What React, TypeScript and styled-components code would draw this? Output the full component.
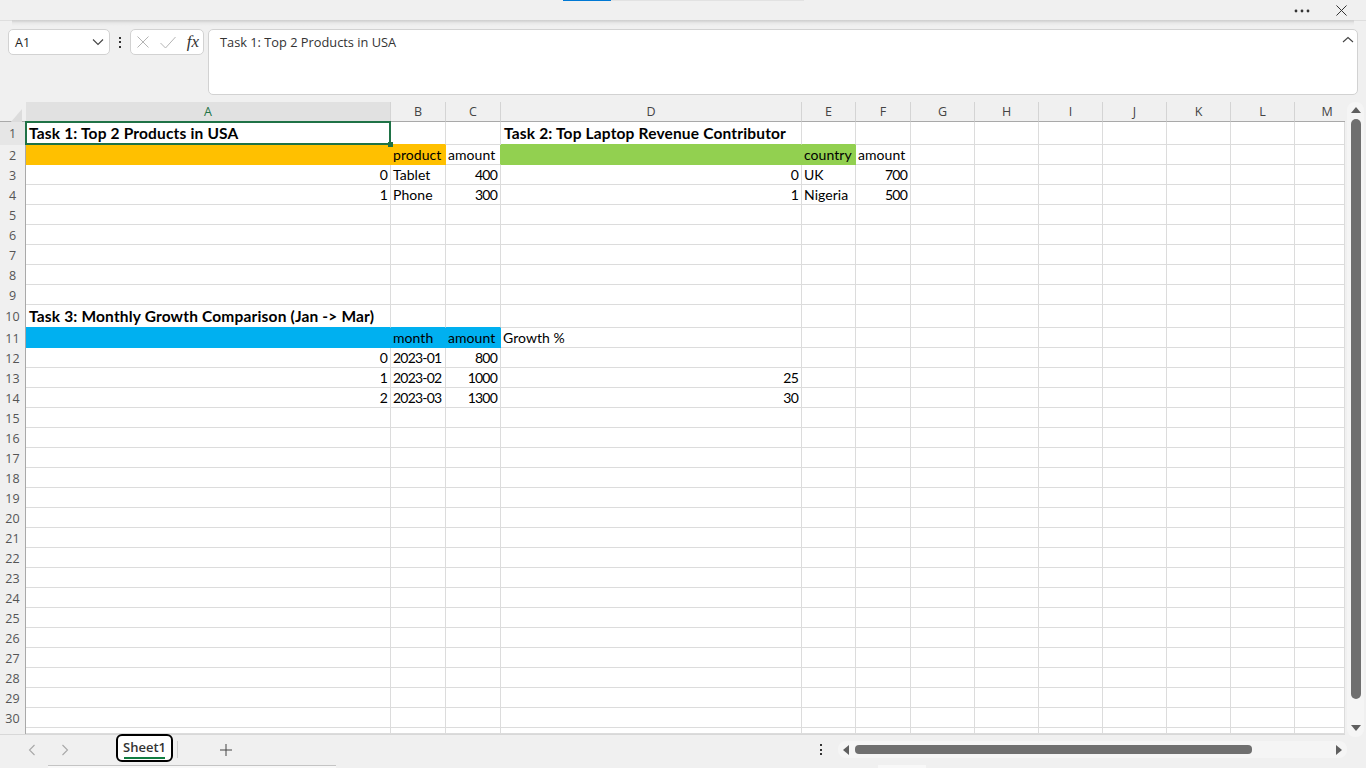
import React from 'react'
import styled, { createGlobalStyle } from 'styled-components'

const UI_FONT = '"Open Sans", "Noto Sans", sans-serif'
const CELL_FONT = 'Lato, "Noto Sans", sans-serif'
const GRID_LINE = '#dcdcdc'

const GlobalStyle = createGlobalStyle`
  html, body {
    margin: 0;
    padding: 0;
    background: #f0f0f0;
    overflow: hidden;
  }
`

const Page = styled.div`
  width: 1366px;
  height: 768px;
  display: flex;
  flex-direction: column;
  background: #f0f0f0;
  overflow: hidden;
  font-family: ${UI_FONT};
`

const TopBar = styled.div`
  height: 21px;
  box-sizing: border-box;
  border-bottom: 1px solid #dedede;
  display: flex;
  flex-direction: column;
`

const LoadStrip = styled.div`
  height: 1px;
  padding-left: 563px;
  display: flex;
`

const LoadSegment = styled.div<{ $width: number; $color: string }>`
  width: ${(p) => p.$width}px;
  height: 1px;
  background: ${(p) => p.$color};
`

const WindowActions = styled.div`
  flex: 1;
  display: flex;
  justify-content: flex-end;
  align-items: center;
  gap: 26px;
  padding-right: 19px;
`

const IconSlot = styled.div`
  display: flex;
  align-items: center;
  justify-content: center;
`

const RibbonShadow = styled.div`
  height: 8px;
  margin: -1px 12px 1px;
  background: linear-gradient(#cfcfcf 0, #d4d4d4 1px, #e8e8e8 3px, #f0f0f0 6px);
`

const FormulaBar = styled.div`
  height: 73px;
  box-sizing: border-box;
  padding: 0 8px;
  display: flex;
  align-items: flex-start;
`

const NameBox = styled.div`
  width: 102px;
  height: 26px;
  box-sizing: border-box;
  padding: 0 5px 0 6px;
  background: #fff;
  border: 1px solid #d2d2d2;
  border-radius: 5px;
  display: flex;
  align-items: center;
  justify-content: space-between;
  font-size: 12.5px;
  color: #222;
`

const VerticalDots = styled.div`
  width: 20px;
  height: 26px;
  display: flex;
  flex-direction: column;
  align-items: center;
  justify-content: center;
  gap: 2.5px;
`

const Dot = styled.span`
  width: 2px;
  height: 2px;
  background: #333;
`

const FormulaButtons = styled.div`
  width: 74px;
  height: 26px;
  box-sizing: border-box;
  padding: 0 4px 0 6px;
  background: #fff;
  border: 1px solid #d2d2d2;
  border-radius: 5px;
  display: flex;
  align-items: center;
  justify-content: space-between;
`

const FxLabel = styled.span`
  font-family: "Liberation Serif", serif;
  font-style: italic;
  font-size: 17px;
  color: #333;
  line-height: 20px;
`

const FormulaInput = styled.div`
  margin-left: 4px;
  width: 1150px;
  height: 66px;
  box-sizing: border-box;
  padding: 3px 3px 0 11px;
  background: #fff;
  border: 1px solid #d2d2d2;
  border-radius: 5px;
  display: flex;
  align-items: flex-start;
  justify-content: space-between;
  font-size: 12.8px;
  line-height: 18px;
  color: #333;
`

const Workspace = styled.div`
  height: 633px;
  display: flex;
  align-items: flex-start;
`

const SheetGrid = styled.div`
  width: 1345px;
  height: 633px;
  box-sizing: border-box;
  border-bottom: 1px solid #d8d8d8;
  display: grid;
  grid-template-columns: 26px 365px 55px 55px 301px 54px 55px repeat(6, 64px) 50px;
  overflow: hidden;
  background: #fff;
`

const Corner = styled.div`
  height: 20px;
  box-sizing: border-box;
  padding: 4px 0 0 10px;
  background: #f0f0f0;
  border-bottom: 1px solid #a9a9a9;
`

const ColumnHeader = styled.div<{ $active?: boolean; $last?: boolean }>`
  height: 20px;
  box-sizing: border-box;
  padding-left: ${(p) => (p.$last ? '14px' : 0)};
  display: flex;
  align-items: center;
  justify-content: center;
  font-size: 12.5px;
  color: ${(p) => (p.$active ? '#217346' : '#444')};
  background: ${(p) => (p.$active ? '#e1e1e1' : '#f0f0f0')};
  border-right: ${(p) => (p.$last ? 0 : '1px solid #d4d4d4')};
  border-bottom: 1px solid #a9a9a9;
`

const RowHeader = styled.div<{ $active?: boolean; $height: number }>`
  height: ${(p) => p.$height}px;
  box-sizing: border-box;
  display: flex;
  align-items: center;
  justify-content: center;
  font-size: 12.5px;
  color: #555;
  background: ${(p) => (p.$active ? '#e6e6e6' : '#f0f0f0')};
  border-right: 1px solid #a9a9a9;
`

const Cell = styled.div<{
  $height: number
  $fill?: string
  $rightLine: string
  $bottomLine: string
  $right?: boolean
  $bold?: boolean
  $digits?: boolean
}>`
  position: relative;
  height: ${(p) => p.$height}px;
  box-sizing: border-box;
  padding: ${(p) => (p.$bold ? '0 3px' : p.$right ? '0 3px 0 2px' : '0 2px')};
  display: flex;
  align-items: center;
  justify-content: ${(p) => (p.$right ? 'flex-end' : 'flex-start')};
  font-family: ${CELL_FONT};
  font-size: ${(p) => (p.$bold ? '15.5px' : '14px')};
  font-weight: ${(p) => (p.$bold ? 700 : 400)};
  letter-spacing: ${(p) => (p.$bold ? '0.17px' : p.$digits ? '-0.8px' : '0.05px')};
  color: #000;
  white-space: nowrap;
  background: ${(p) => p.$fill ?? '#fff'};
  border-right: 1px solid ${(p) => p.$rightLine};
  border-bottom: 1px solid ${(p) => p.$bottomLine};
`

const Selection = styled.div`
  position: absolute;
  left: -1px;
  top: -1px;
  right: -1px;
  bottom: -1px;
  border: 2px solid #1f7246;
  z-index: 2;
  pointer-events: none;

  &::after {
    content: '';
    position: absolute;
    right: -4px;
    bottom: -4px;
    width: 5px;
    height: 5px;
    background: #1f7246;
  }
`

const VScroll = styled.div`
  position: relative;
  z-index: 1;
  width: 17px;
  height: 635px;
  margin: 0 0 -2px 2px;
  background: #f5f5f5;
  border-radius: 8px;
  display: flex;
  flex-direction: column;
  align-items: center;
  padding-top: 3px;
  box-sizing: border-box;
`

const VThumb = styled.div`
  width: 10px;
  height: 580px;
  margin: 4px 0 24px;
  background: #6f6f6f;
  border-radius: 5px;
`

const Footer = styled.div`
  height: 30px;
  box-sizing: border-box;
  padding-left: 15px;
  display: flex;
  align-items: flex-start;
`

const NavButton = styled.div`
  width: 33px;
  height: 30px;
  display: flex;
  align-items: center;
  justify-content: center;
`

const SheetTab = styled.div`
  width: 57px;
  height: 28px;
  margin: -1px 0 0 35px;
  padding-top: 1px;
  box-sizing: border-box;
  position: relative;
  z-index: 1;
  background: #fff;
  border: 2px solid #000;
  border-radius: 6px;
  display: flex;
  flex-direction: column;
  align-items: center;
  font-size: 13px;
  font-weight: 600;
  color: #333;
  line-height: 20px;
`

const TabUnderline = styled.div`
  width: 41px;
  height: 2px;
  background: #107c41;
`

const TabSeparator = styled.div`
  width: 1px;
  height: 17px;
  margin: 6px 0 0 4px;
  background: #cfcfcf;
`

const AddSheet = styled.div`
  width: 22px;
  height: 30px;
  margin-left: 37px;
  display: flex;
  align-items: center;
  justify-content: center;
`

const FooterSpacer = styled.div`
  flex: 1;
`

const HScrollArea = styled.div`
  display: flex;
  align-items: center;
  margin: 6px 19px 0 0;
`

const SmallDots = styled(VerticalDots)`
  width: 20px;
  height: 17px;
  margin-right: 7px;
`

const HScroll = styled.div`
  width: 509px;
  height: 17px;
  box-sizing: border-box;
  padding: 0 3px;
  background: #f5f5f5;
  border-radius: 8px;
  display: flex;
  align-items: center;
`

const HThumb = styled.div`
  width: 397px;
  height: 9px;
  margin: 0 82px 0 4px;
  background: #6f6f6f;
  border-radius: 4px;
`

const BottomStrip = styled.div`
  height: 3px;
  display: flex;
`

const StripPiece = styled.div<{ $left: number; $width: number; $line?: boolean }>`
  margin-left: ${(p) => p.$left}px;
  width: ${(p) => p.$width}px;
  box-sizing: border-box;
  background: #f8f8f8;
  border-top: ${(p) => (p.$line ? '1px solid #c4c4c4' : 0)};
`

type CellValue = { text?: string; fill?: string; right?: boolean; bold?: boolean; digits?: boolean }

const AMBER = '#ffc000'
const GREEN = '#92d050'
const BLUE = '#00b0f0'

const num = (text: string): CellValue => ({ text, right: true, digits: true })
const str = (text: string): CellValue => ({ text })
const month = (text: string): CellValue => ({ text, digits: true })
const title = (text: string): CellValue => ({ text, bold: true })

const cells: Record<string, CellValue> = {
  A1: title('Task 1: Top 2 Products in USA'),
  D1: title('Task 2: Top Laptop Revenue Contributor'),
  A2: { fill: AMBER },
  B2: { text: 'product', fill: AMBER },
  C2: str('amount'),
  D2: { fill: GREEN },
  E2: { text: 'country', fill: GREEN },
  F2: str('amount'),
  A3: num('0'),
  B3: str('Tablet'),
  C3: num('400'),
  D3: num('0'),
  E3: str('UK'),
  F3: num('700'),
  A4: num('1'),
  B4: str('Phone'),
  C4: num('300'),
  D4: num('1'),
  E4: str('Nigeria'),
  F4: num('500'),
  A10: title('Task 3: Monthly Growth Comparison (Jan -> Mar)'),
  A11: { fill: BLUE },
  B11: { text: 'month', fill: BLUE },
  C11: { text: 'amount', fill: BLUE },
  D11: str('Growth %'),
  A12: num('0'),
  B12: month('2023-01'),
  C12: num('800'),
  A13: num('1'),
  B13: month('2023-02'),
  C13: num('1000'),
  D13: num('25'),
  A14: num('2'),
  B14: month('2023-03'),
  C14: num('1300'),
  D14: num('30'),
}

const columns = ['A', 'B', 'C', 'D', 'E', 'F', 'G', 'H', 'I', 'J', 'K', 'L', 'M']
const rows = Array.from({ length: 31 }, (_, i) => i + 1)

const rowHeight = (row: number) => {
  if (row === 1 || row === 10) return 23
  if (row === 31) return 6
  return 20
}

const Triangle = ({ dir }: { dir: 'up' | 'down' | 'left' | 'right' }) => {
  const points = {
    up: '0,8 5,2 10,8',
    down: '0,2 10,2 5,8',
    left: '8,0 8,10 2,5',
    right: '2,0 2,10 8,5',
  }[dir]
  return (
    <svg width="10" height="10" viewBox="0 0 10 10">
      <polygon points={points} fill="#5f5f5f" />
    </svg>
  )
}

const Chevron = ({ d, color, size = 12 }: { d: string; color: string; size?: number }) => (
  <svg width={size} height={size} viewBox="0 0 12 12" fill="none" stroke={color} strokeWidth="1.1">
    <path d={d} />
  </svg>
)

const Cross = ({ size, color }: { size: number; color: string }) => (
  <svg width={size} height={size} viewBox="0 0 12 12" fill="none" stroke={color} strokeWidth={12 / size}>
    <path d="M0.5 0.5 L11.5 11.5 M11.5 0.5 L0.5 11.5" />
  </svg>
)

const App: React.FC = () => {
  return (
    <Page>
      <GlobalStyle />
      <TopBar>
        <LoadStrip>
          <LoadSegment $width={48} $color="#0078d4" />
          <LoadSegment $width={193} $color="#e2e2e2" />
        </LoadStrip>
        <WindowActions>
          <IconSlot>
            <svg width="16" height="4" viewBox="0 0 16 4" fill="#333">
              <circle cx="2" cy="2" r="1.4" />
              <circle cx="8" cy="2" r="1.4" />
              <circle cx="14" cy="2" r="1.4" />
            </svg>
          </IconSlot>
          <IconSlot>
            <Cross size={11} color="#333" />
          </IconSlot>
        </WindowActions>
      </TopBar>
      <RibbonShadow />
      <FormulaBar>
        <NameBox>
          A1
          <Chevron d="M1 3.5 L6 8.5 L11 3.5" color="#444" />
        </NameBox>
        <VerticalDots>
          <Dot />
          <Dot />
          <Dot />
        </VerticalDots>
        <FormulaButtons>
          <Cross size={12} color="#b4b4b4" />
          <svg width="16" height="13" viewBox="0 0 16 13" fill="none" stroke="#b4b4b4" strokeWidth="1">
            <path d="M0.5 7 L5.5 12 L15.5 1" />
          </svg>
          <FxLabel>fx</FxLabel>
        </FormulaButtons>
        <FormulaInput>
          Task 1: Top 2 Products in USA
          <Chevron d="M1 9 L6 4.5 L11 9" color="#444" />
        </FormulaInput>
      </FormulaBar>
      <Workspace>
        <SheetGrid>
          <Corner>
            <svg width="12" height="14" viewBox="0 0 12 14">
              <polygon points="12,0 12,14 0,14" fill="#dcdcdc" />
            </svg>
          </Corner>
          {columns.map((col) => (
            <ColumnHeader key={col} $active={col === 'A'} $last={col === 'M'}>
              {col}
            </ColumnHeader>
          ))}
          {rows.map((row) => (
            <React.Fragment key={row}>
              <RowHeader $height={rowHeight(row)} $active={row === 1}>
                {row < 31 ? row : ''}
              </RowHeader>
              {columns.map((col, i) => {
                const id = `${col}${row}`
                const cell = cells[id] ?? {}
                // a filled neighbour paints over the shared grid line
                const nextFill = cells[`${columns[i + 1]}${row}`]?.fill
                const belowFill = cells[`${col}${row + 1}`]?.fill
                return (
                  <Cell
                    key={id}
                    $height={rowHeight(row)}
                    $fill={cell.fill}
                    $rightLine={cell.fill ?? nextFill ?? GRID_LINE}
                    $bottomLine={cell.fill ?? belowFill ?? GRID_LINE}
                    $right={cell.right}
                    $bold={cell.bold}
                    $digits={cell.digits}
                  >
                    {cell.text}
                    {id === 'A1' && <Selection />}
                  </Cell>
                )
              })}
            </React.Fragment>
          ))}
        </SheetGrid>
        <VScroll>
          <Triangle dir="up" />
          <VThumb />
          <Triangle dir="down" />
        </VScroll>
      </Workspace>
      <Footer>
        <NavButton>
          <Chevron d="M8.5 1 L3.5 6 L8.5 11" color="#a8a8a8" />
        </NavButton>
        <NavButton>
          <Chevron d="M3.5 1 L8.5 6 L3.5 11" color="#a8a8a8" />
        </NavButton>
        <SheetTab>
          Sheet1
          <TabUnderline />
        </SheetTab>
        <TabSeparator />
        <AddSheet>
          <svg width="12" height="12" viewBox="0 0 12 12" stroke="#444" strokeWidth="1">
            <path d="M6 0 V12 M0 6 H12" />
          </svg>
        </AddSheet>
        <FooterSpacer />
        <HScrollArea>
          <SmallDots>
            <Dot />
            <Dot />
            <Dot />
          </SmallDots>
          <HScroll>
            <Triangle dir="left" />
            <HThumb />
            <Triangle dir="right" />
          </HScroll>
        </HScrollArea>
      </Footer>
      <BottomStrip>
        <StripPiece $left={48} $width={288} $line />
        <StripPiece $left={542} $width={48} />
      </BottomStrip>
    </Page>
  )
}

export default App
